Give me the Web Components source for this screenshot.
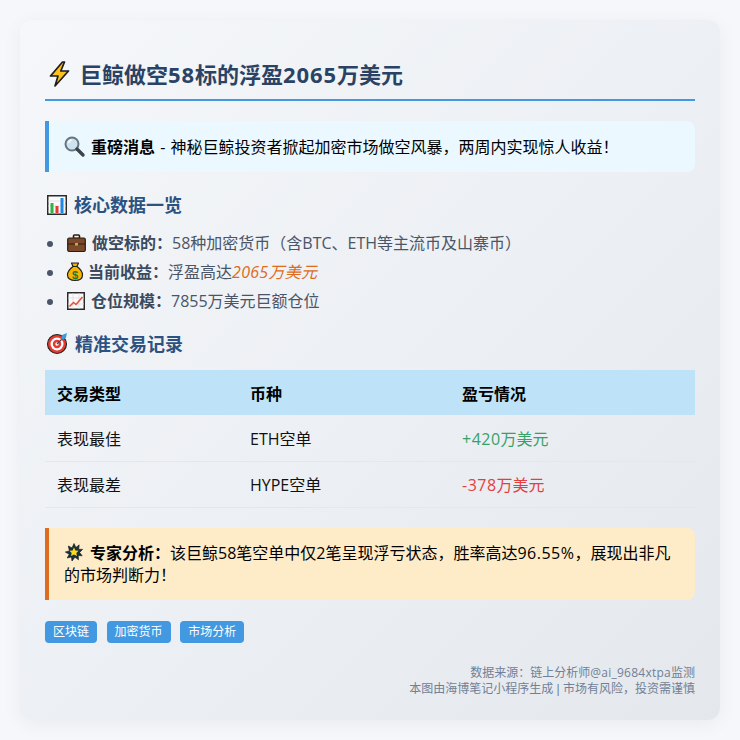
<!DOCTYPE html>
<html lang="zh"><head><meta charset="utf-8"><style>
html,body{margin:0;padding:0;background:#f5f7fa}
body{font-family:"Open Sans","Noto Sans CJK SC","Noto Sans",sans-serif;width:740px;height:740px;overflow:hidden}
</style></head><body>
<report-card>
<report-title><em-icon name="bolt" w="24" h="26" l="2" r="9"></em-icon>巨鲸做空<num-run s=".9">58</num-run>标的浮盈<num-run s=".9">2065</num-run>万美元</report-title>
<call-out tone="blue"><em-icon name="search" w="20" h="20" l="0" r="7"></em-icon><b>重磅消息</b> - 神秘巨鲸投资者掀起加密市场做空风暴，两周内实现惊人收益！</call-out>
<section-head><em-icon name="chart" w="20" h="20" l="2" r="7"></em-icon>核心数据一览</section-head>
<data-list>
<data-item><em-icon name="case" w="19" h="18" l="2" r="6"></em-icon><b>做空标的：</b>58种加密货币（含BTC、ETH等主流币及山寨币）</data-item>
<data-item><em-icon name="money" w="16" h="19" l="2" r="5"></em-icon><b>当前收益：</b>浮盈高达<i>2065万美元</i></data-item>
<data-item><em-icon name="up" w="18" h="18" l="2" r="6"></em-icon><b>仓位规模：</b>7855万美元巨额仓位</data-item>
</data-list>
<section-head style="margin-top:15px"><em-icon name="target" w="21" h="21" l="2" r="7"></em-icon>精准交易记录</section-head>
<trade-table></trade-table>
<call-out tone="orange"><em-icon name="boom" w="18" h="18" l="1" r="7"></em-icon><b>专家分析：</b>该巨鲸58笔空单中仅2笔呈现浮亏状态，胜率高达<num-run s=".5">96.55%</num-run>，展现出非凡的市场判断力！</call-out>
<tag-row><tag-pill>区块链</tag-pill><tag-pill>加密货币</tag-pill><tag-pill>市场分析</tag-pill></tag-row>
<report-foot>数据来源：链上分析师<num-run s=".25">@ai_9684xtpa</num-run>监测<br>本图由海博笔记小程序生成<num-run f="1"> | </num-run>市场有风险，投资需谨慎</report-foot>
</report-card>
<script>
function def(name,html){customElements.define(name,class extends HTMLElement{connectedCallback(){if(this.shadowRoot)return;const r=this.attachShadow({mode:"open"});r.innerHTML=typeof html==="function"?html(this):html;}})}
const icons={
bolt:'<path d="M15.500 1 3.500 15h7.500L8 25 21.500 10h-7.700L17.500 1z" fill="#fcc21b" stroke="#1d1d1d" stroke-width="1.700" stroke-linejoin="round"/>',
search:'<circle cx="8" cy="8" r="6.500" fill="#cfe3ef" stroke="#66757f" stroke-width="2"/><path d="M4.500 7a4 4 0 0 1 3-3" stroke="#fff" stroke-width="1.500" fill="none"/><path d="M13 13l6 6" stroke="#3c434a" stroke-width="3.400" stroke-linecap="round"/>',
chart:'<rect x=".75" y=".75" width="18.500" height="18.500" fill="#fafafa" stroke="#2a2a2a" stroke-width="1.500"/><path d="M1 6h18M1 11h18M1 16h18" stroke="#d5d8dc" stroke-width=".7"/><rect x="3.500" y="8" width="3" height="10" fill="#2fb344"/><rect x="8.500" y="11" width="3" height="7" fill="#e53935"/><rect x="13.500" y="3" width="3" height="15" fill="#1e88e5"/>',
case:'<rect x="6.500" y="1" width="6" height="3.500" rx="1" fill="none" stroke="#2c1c10" stroke-width="1.600"/><rect x=".7" y="4" width="17.600" height="13.500" rx="1.500" fill="#7a4a2a" stroke="#2c1c10" stroke-width="1.200"/><path d="M1 10h17" stroke="#3c2414" stroke-width="1.200"/><rect x="8" y="9" width="3" height="2.500" fill="#e0a040"/>',
money:'<path d="M4.500 1h7l-1.500 3.500H6z" fill="#f5b000" stroke="#222" stroke-width="1.200" stroke-linejoin="round"/><path d="M6 4.500h4C13.500 7 15.500 10 15.500 13c0 3.500-3 5.500-7.500 5.500S.500 16.500.500 13C.500 10 2.500 7 6 4.500z" fill="#f7b500" stroke="#222" stroke-width="1.200"/><text x="8" y="16.500" font-size="11" font-family="Liberation Sans" font-weight="700" text-anchor="middle" fill="#187a2f">$</text>',
up:'<rect x=".75" y=".75" width="16.500" height="16.500" fill="#fafafa" stroke="#2a2a2a" stroke-width="1.500"/><path d="M1 6h16M1 12h16M6 1v16M12 1v16" stroke="#d5d8dc" stroke-width=".7"/><path d="M2.500 14.500 6.500 10.500l2.500 2L15.500 5" fill="none" stroke="#e8503a" stroke-width="1.600"/>',
target:'<circle cx="10" cy="11" r="9.500" fill="#e53a30" stroke="#222" stroke-width="1.100"/><circle cx="10" cy="11" r="6.500" fill="#fff"/><circle cx="10" cy="11" r="4.200" fill="#e53a30"/><circle cx="10" cy="11" r="1.700" fill="#fff"/><path d="M10 11 17 4" stroke="#3b4a55" stroke-width="1.300"/><path d="M14 6.500 15 2l5-2-1 4.500-.5 1z" fill="#3a9be0"/>',
boom:'<path d="M9 .5l1.900 4 3.300-2.600-.6 4.300 4 .2-3 3 2.600 3.400-4-.3.300 4.300-3.500-2.600L7 18l-.6-4.100L2.200 15l2.100-3.700L.3 9l4.100-1.100L3.300 3l3.700 1.900z" fill="#17313f" stroke="#111" stroke-width=".6" stroke-linejoin="round"/><path d="M9 4.500l1.400 2.900 3.100.3-2.200 2.200.7 3.100L9 11.500l-3 1.500.7-3.100L4.500 7.700l3.100-.3z" fill="#ffd91a"/>'
};
def("em-icon",h=>{const g=k=>h.getAttribute(k);return `<style>:host{display:inline-block;width:${g("w")}px;height:${g("h")}px;vertical-align:calc(8px - .18em);margin:-8px ${g("r")}px -8px ${g("l")}px}svg{display:block;width:100%;height:100%;overflow:visible}</style><svg viewBox="0 0 ${g("w")} ${g("h")}" aria-hidden="true">${icons[g("name")]}</svg>`});
def("num-run",h=>`<style>:host{display:inline;letter-spacing:${h.getAttribute("s")||0}px;${h.getAttribute("f")?'font-family:"Liberation Sans",sans-serif;white-space:pre':''}}</style><slot></slot>`);
def("report-card",`<style>:host{display:block;box-sizing:border-box;width:700px;height:700px;margin:20px;padding:25px;border-radius:12px;background:linear-gradient(135deg,#f5f7fa 0%,#e4e8ed 100%);box-shadow:0 4px 20px rgba(0,0,0,.05)}</style><slot></slot>`);
def("report-title",`<style>:host{display:block;margin-top:15px;height:39px;line-height:29px;font-size:22px;font-weight:700;color:#2a4365;border-bottom:2px solid #4299e1}</style><slot></slot>`);
def("call-out",h=>{const o=h.getAttribute("tone")==="orange";return `<style>:host{display:block;box-sizing:border-box;margin-top:20px;padding:${o?"14px 15px":"15px 15px 14px"};border-radius:0 8px 8px 0;font-size:16px;line-height:22px;color:#000;word-spacing:${o?0:1}px;border-left:4px solid ${o?"#dd6b20":"#4299e1"};background:${o?"#feebc8":"#ebf8ff"}}</style><slot></slot>`});
def("section-head",`<style>:host{display:block;margin-top:20px;font-size:18px;line-height:26px;font-weight:700;color:#2c5282}</style><slot></slot>`);
def("data-list",`<style>:host{display:block;margin-top:11px;padding-left:20px}</style><slot></slot>`);
def("data-item",`<style>:host{display:list-item;list-style:disc;line-height:29px;font-size:16px;color:#4a5568}::slotted(b){color:#3b4a5e}::slotted(i){color:#dd6b20;letter-spacing:.3px}</style><slot></slot>`);
def("trade-table",`<style>:host{display:block;margin-top:13px;font-size:16px}
table{width:100%;border-collapse:collapse;table-layout:fixed}
th,td{padding:0 12px;text-align:left;height:46px;box-sizing:border-box;font-family:inherit}
th{background:#bee3f8;font-weight:700;color:#000;height:45px}
td{border-bottom:1px solid #e2e8f0;color:#111}
.g{color:#38a169}.r{color:#e53e3e}.n{letter-spacing:.5px}</style>
<table><colgroup><col style="width:193px"><col style="width:212px"><col></colgroup>
<tr><th>交易类型</th><th>币种</th><th>盈亏情况</th></tr>
<tr><td>表现最佳</td><td>ETH空单</td><td class="g"><span class="n">+420</span>万美元</td></tr>
<tr><td>表现最差</td><td>HYPE空单</td><td class="r"><span class="n">-378</span>万美元</td></tr></table>`);
def("tag-row",`<style>:host{display:flex;gap:9.6px;margin-top:21px}</style><slot></slot>`);
def("tag-pill",`<style>:host{display:block;height:22px;line-height:22px;padding:0 8px;border-radius:4px;background:#4299e1;color:#fff;font-size:12px}</style><slot></slot>`);
def("report-foot",`<style>:host{display:block;margin-top:22px;text-align:right;font-size:12px;line-height:16px;color:#718096}</style><slot></slot>`);
</script>
</body></html>
